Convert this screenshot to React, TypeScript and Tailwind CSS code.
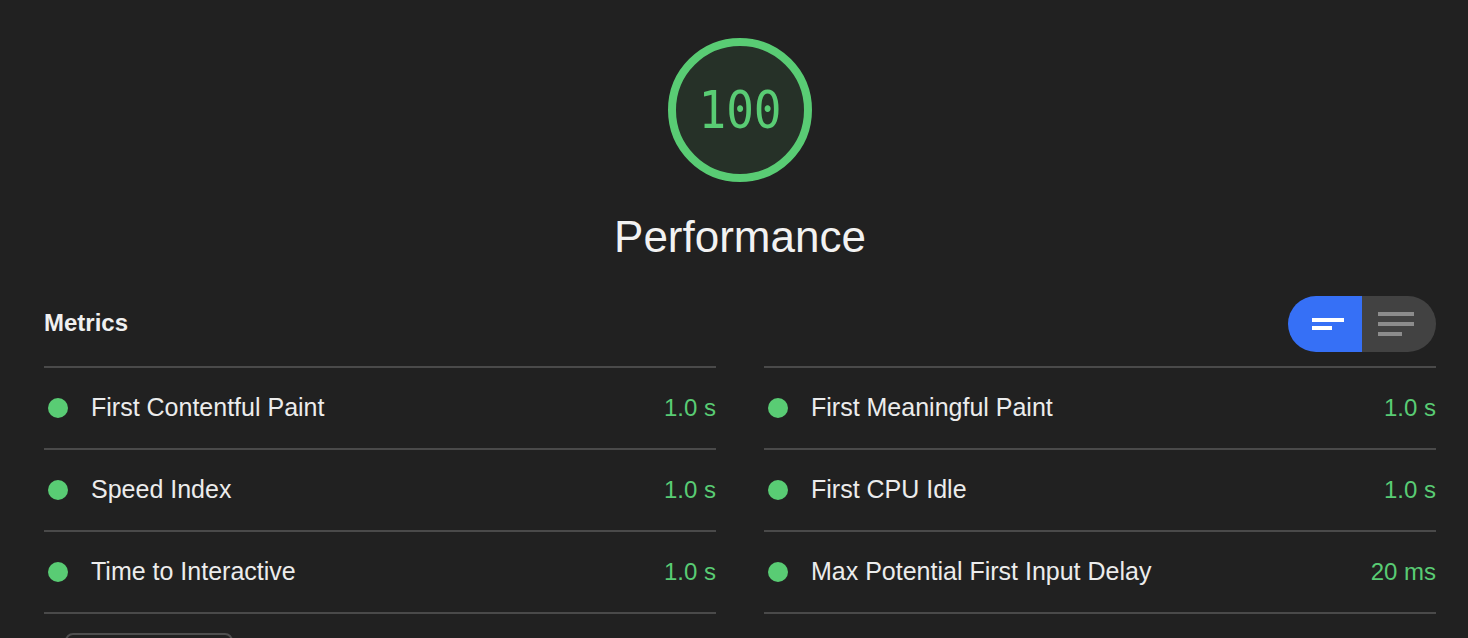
import React from "react";

const metrics: [string, string][][] = [
  [
    ["First Contentful Paint", "1.0 s"],
    ["Speed Index", "1.0 s"],
    ["Time to Interactive", "1.0 s"],
  ],
  [
    ["First Meaningful Paint", "1.0 s"],
    ["First CPU Idle", "1.0 s"],
    ["Max Potential First Input Delay", "20 ms"],
  ],
];

function Column({ items }: { items: [string, string][] }) {
  return (
    <div className="border-b-2 border-[#4a4a4a]">
      {items.map(([label, value]) => (
        <div
          key={label}
          className="flex items-center h-[82px] border-t-2 border-[#4a4a4a]"
        >
          <span className="ml-[4px] w-5 h-5 rounded-full bg-[#59cc74] shrink-0" />
          <span className="ml-[23px] text-[25px] text-[#ececec]">{label}</span>
          <span className="ml-auto text-[24px] text-[#59cc74]">{value}</span>
        </div>
      ))}
    </div>
  );
}

export default function App() {
  return (
    <div
      className="min-h-screen bg-[#212121] pl-[44px] pr-[32px] pt-[38px] overflow-hidden"
      style={{ fontFamily: '"Liberation Sans", Arial, sans-serif' }}
    >
      <div className="flex flex-col items-center">
        <svg width="144" height="144" viewBox="0 0 144 144">
          <circle cx="72" cy="72" r="68" fill="#263128" stroke="#59cc74" strokeWidth="8" />
          <text
            x="72"
            y="90"
            textAnchor="middle"
            fill="#59cc74"
            fontSize="49"
            fontFamily='"DejaVu Sans Mono", "Liberation Mono", monospace'
            transform="translate(72 90) scale(0.94 1.06) translate(-72 -90)"
          >
            100
          </text>
        </svg>
        <div className="mt-[30px] h-[50px] leading-[50px] text-[44px] text-[#f2f2f2]">
          Performance
        </div>
      </div>

      <div className="mt-[34px] h-[56px] flex items-center justify-between">
        <div className="text-[24px] font-bold text-[#f0f0f0] -mt-[3px]">Metrics</div>
        <div className="flex h-[56px] w-[148px] rounded-full overflow-hidden">
          <div className="w-[74px] bg-[#3670f6] flex flex-col justify-center pl-[24px] gap-[4px]">
            <span className="block h-[4px] w-[32px] bg-white" />
            <span className="block h-[4px] w-[20px] bg-white" />
          </div>
          <div className="w-[74px] bg-[#424242] flex flex-col justify-center pl-[16px] gap-[6px]">
            <span className="block h-[4px] w-[36px] bg-[#8c8c8c]" />
            <span className="block h-[4px] w-[36px] bg-[#8c8c8c]" />
            <span className="block h-[4px] w-[24px] bg-[#8c8c8c]" />
          </div>
        </div>
      </div>

      <div className="mt-[14px] grid grid-cols-2 gap-x-[48px]">
        <Column items={metrics[0]} />
        <Column items={metrics[1]} />
      </div>

      <div className="mt-[19px] ml-[21px] w-[168px] h-[40px] rounded-[8px] border-2 border-[#4f4f4f]" />
    </div>
  );
}
